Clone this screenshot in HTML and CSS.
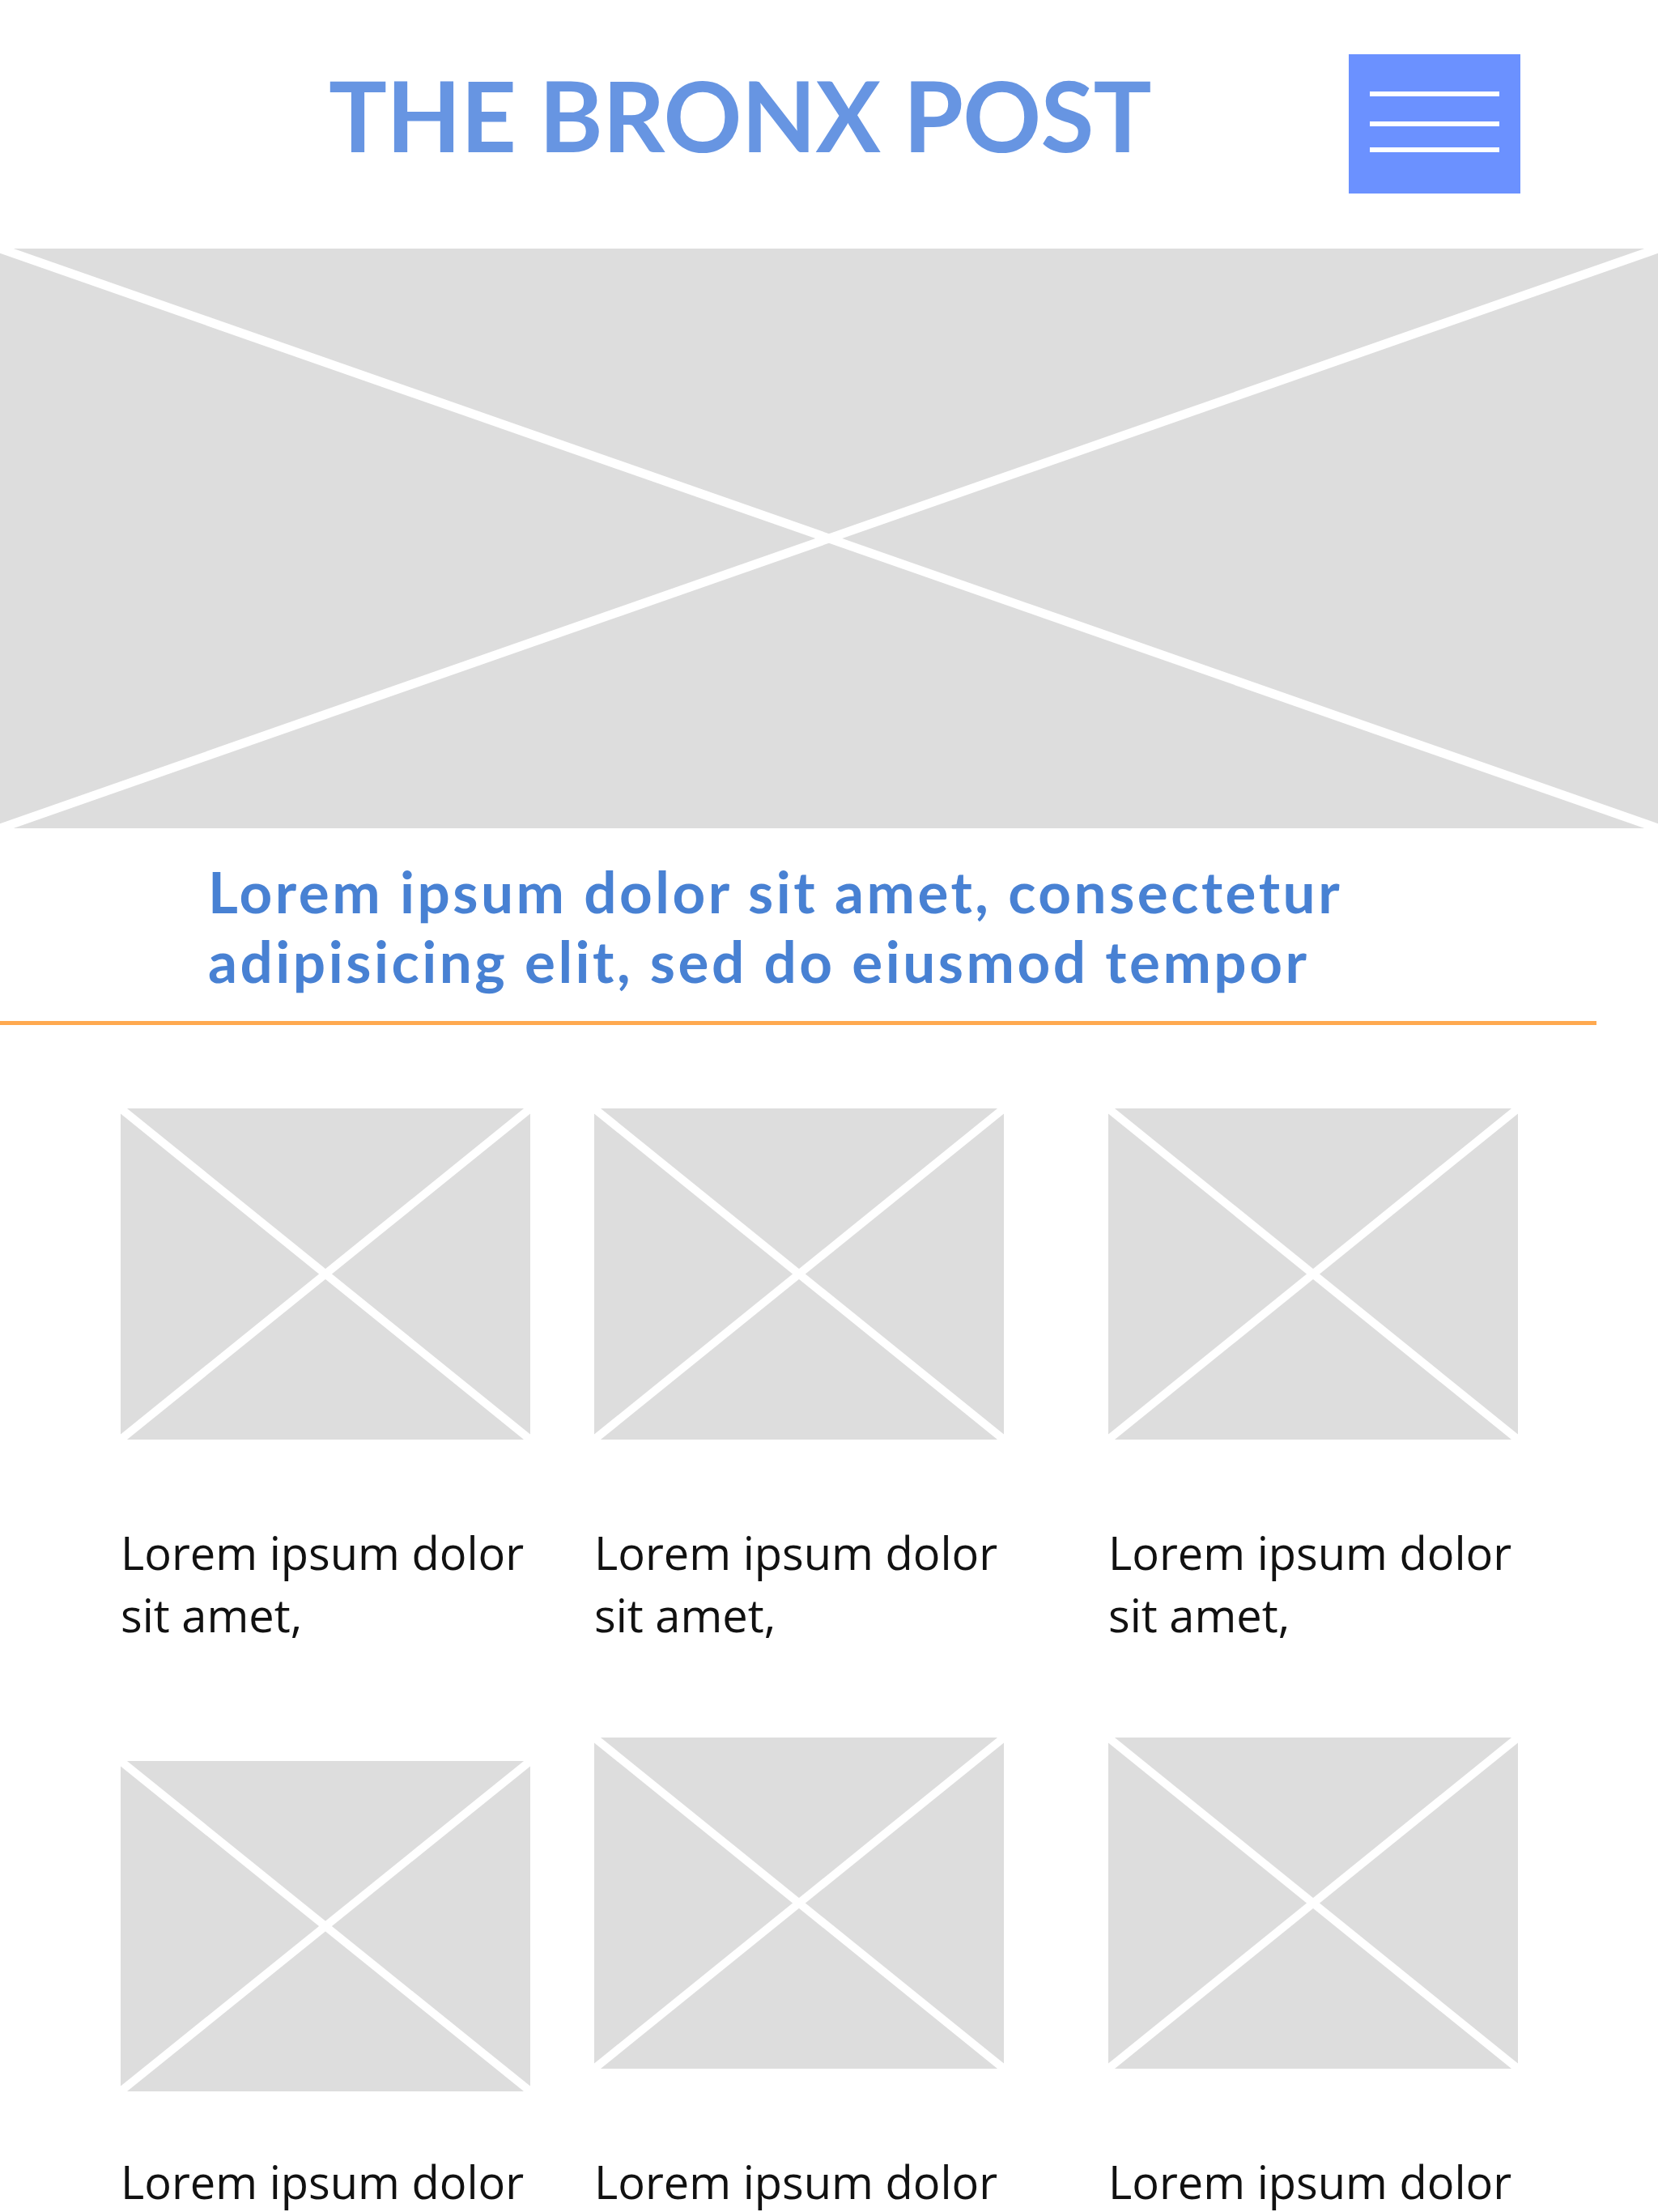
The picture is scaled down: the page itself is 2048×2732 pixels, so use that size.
FILE: index.html
```html
<!DOCTYPE html>
<html lang="en">
  <head>
    <meta charset="UTF-8" />
    <meta name="viewport" content="width=device-width, initial-scale=1.0" />
    <title>The Bronx Post</title>
    <link rel="stylesheet" href="styles.css">
  </head>
  <body>
    <!-- CABECERA -->
    <header class="header">
      <h1 class="logo">THE BRONX POST</h1>
      <button class="menu-btn" aria-label="Menu">
        <span></span>
        <span></span>
        <span></span>
      </button>
    </header>

    <!-- IMAGEN PRINCIPAL -->
    <div class="placeholder hero">
      <svg viewBox="0 0 100 100" preserveAspectRatio="none">
        <line x1="0" y1="0" x2="100" y2="100" />
        <line x1="100" y1="0" x2="0" y2="100" />
      </svg>
    </div>

    <h2 class="headline">Lorem ipsum dolor sit amet, consectetur adipisicing elit, sed do eiusmod tempor</h2>
    <hr class="divider" />

    <!-- NOTICIAS -->
    <section class="news-grid">
      <article class="card">
        <div class="placeholder thumb">
          <svg viewBox="0 0 100 100" preserveAspectRatio="none"><line x1="0" y1="0" x2="100" y2="100" /><line x1="100" y1="0" x2="0" y2="100" /></svg>
        </div>
        <p class="caption">Lorem ipsum dolor sit amet,</p>
      </article>
      <article class="card">
        <div class="placeholder thumb">
          <svg viewBox="0 0 100 100" preserveAspectRatio="none"><line x1="0" y1="0" x2="100" y2="100" /><line x1="100" y1="0" x2="0" y2="100" /></svg>
        </div>
        <p class="caption">Lorem ipsum dolor sit amet,</p>
      </article>
      <article class="card">
        <div class="placeholder thumb">
          <svg viewBox="0 0 100 100" preserveAspectRatio="none"><line x1="0" y1="0" x2="100" y2="100" /><line x1="100" y1="0" x2="0" y2="100" /></svg>
        </div>
        <p class="caption">Lorem ipsum dolor sit amet,</p>
      </article>

      <article class="card card-low">
        <div class="placeholder thumb">
          <svg viewBox="0 0 100 100" preserveAspectRatio="none"><line x1="0" y1="0" x2="100" y2="100" /><line x1="100" y1="0" x2="0" y2="100" /></svg>
        </div>
        <p class="caption">Lorem ipsum dolor sit amet,</p>
      </article>
      <article class="card">
        <div class="placeholder thumb">
          <svg viewBox="0 0 100 100" preserveAspectRatio="none"><line x1="0" y1="0" x2="100" y2="100" /><line x1="100" y1="0" x2="0" y2="100" /></svg>
        </div>
        <p class="caption">Lorem ipsum dolor sit amet,</p>
      </article>
      <article class="card">
        <div class="placeholder thumb">
          <svg viewBox="0 0 100 100" preserveAspectRatio="none"><line x1="0" y1="0" x2="100" y2="100" /><line x1="100" y1="0" x2="0" y2="100" /></svg>
        </div>
        <p class="caption">Lorem ipsum dolor sit amet,</p>
      </article>
    </section>
  </body>
</html>
```

FILE: styles.css
```css
body {
  margin: 0;
  background-color: #ffffff;
  font-family: "Open Sans", "Noto Sans", sans-serif;
  overflow-x: hidden;
}

.header {
  display: flex;
  align-items: flex-start;
  height: 307px;
  box-sizing: border-box;
  padding-top: 67px;
}

.logo {
  margin: 3px 0 0 406px;
  font-family: Lato, "Open Sans", sans-serif;
  font-weight: 700;
  font-size: 120px;
  line-height: 144px;
  letter-spacing: -0.7px;
  color: #6795e2;
}

.menu-btn {
  margin-left: auto;
  margin-right: 170px;
  width: 212px;
  height: 172px;
  background-color: #6b91ff;
  border: none;
  padding: 46px 26px 0;
  display: flex;
  flex-direction: column;
  gap: 31px;
  cursor: pointer;
}

.menu-btn span {
  display: block;
  width: 160px;
  height: 6px;
  background-color: #ffffff;
}

.menu-btn span:last-child {
  margin-top: -5px;
}

.placeholder {
  background-color: #dddddd;
}

.placeholder svg {
  display: block;
  width: 100%;
  height: 100%;
}

.placeholder line {
  stroke: #ffffff;
  stroke-width: 10;
  vector-effect: non-scaling-stroke;
}

.hero {
  height: 716px;
}

.hero line {
  stroke-width: 11;
}

.headline {
  margin: 35px 0 0;
  padding-left: 257px;
  max-width: 1550px;
  font-family: Lato, "Open Sans", sans-serif;
  font-weight: 700;
  font-size: 71px;
  line-height: 86px;
  letter-spacing: 3.5px;
  color: #4881d3;
}

.divider {
  margin: 31px 0 0;
  width: 1972px;
  height: 5px;
  border: none;
  background-color: #ffa94f;
}

.news-grid {
  display: grid;
  grid-template-columns: 585px 635px 506px;
  row-gap: 113px;
  padding-left: 149px;
  margin-top: 103px;
}

.card {
  width: 506px;
}

.thumb {
  height: 409px;
}

.caption {
  margin: 101px 0 0;
  font-size: 56px;
  line-height: 77px;
  color: #111111;
}

.card-low .thumb {
  margin-top: 29px;
  height: 408px;
}

.card-low .caption {
  margin-top: 73px;
}
```
